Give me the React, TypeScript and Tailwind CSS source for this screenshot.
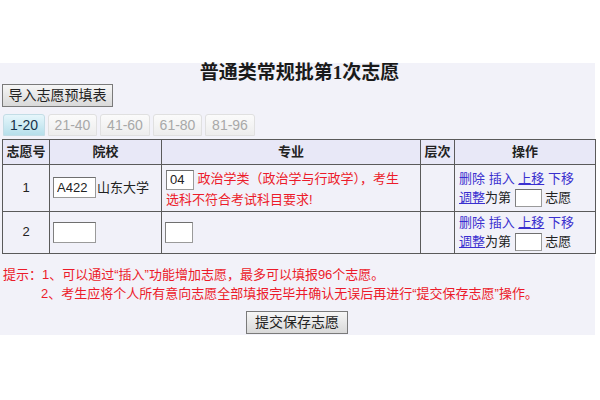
import React from 'react';

const FONT = "font-['Liberation_Sans','Noto_Sans_CJK_SC',sans-serif]";

const TABS = [
  { label: '1-20', width: 'w-[42px]', active: true },
  { label: '21-40', width: 'w-[49px]', active: false },
  { label: '41-60', width: 'w-[50px]', active: false },
  { label: '61-80', width: 'w-[49px]', active: false },
  { label: '81-96', width: 'w-[50px]', active: false },
];

const GrayButton: React.FC<{ children: React.ReactNode; className?: string }> = ({ children, className }) => (
  <button
    type="button"
    className={`h-[23px] border border-[#7a7a7a] bg-gradient-to-b from-[#f6f6f6] to-[#d9d9d9] text-[14px] leading-[21px] text-[#222] ${className || ''}`}
  >
    {children}
  </button>
);

const SmallInput: React.FC<{ value?: string; className: string }> = ({ value, className }) => (
  <input
    readOnly
    defaultValue={value}
    className={`inline-block align-middle border border-[#9a9a9a] border-t-[#6f6f6f] border-l-[#7f7f7f] bg-white px-[3px] text-[13px] text-[#222] outline-none ${className}`}
  />
);

const Actions: React.FC = () => (
  <div className="text-[13px] leading-[19px] text-[#222]">
    <div className="whitespace-nowrap text-[#3a2fcf]">
      <a>删除</a> <a>插入</a> <a className="underline">上移</a> <a>下移</a>
    </div>
    <div className="whitespace-nowrap">
      <a className="text-[#3a2fcf] underline">调整</a>为第 <SmallInput className="h-[18px] w-[27px]" /> 志愿
    </div>
  </div>
);

const cell = 'border border-[#5a5a5a] bg-[#f1f1f9]';
const head = 'border border-[#5a5a5a] bg-[#e8e8f7] text-[13px] font-bold text-[#222] text-center';

export default function App() {
  return (
    <div className={`h-[400px] w-[600px] bg-white pt-[63px] ${FONT}`}>
      <div className="h-[272px] w-[595px] bg-[#f2f2f9]">
        <div className="pl-[4px] text-center text-[19px] font-bold leading-[20px] text-[#1a1a1a]">
          普通类常规批第<span className="font-['Liberation_Serif']">1</span>次志愿
        </div>

        <div className="pl-[2px]">
          <GrayButton className="w-[111px]">导入志愿预填表</GrayButton>
        </div>

        <div className="mt-[7px] flex gap-[3px] pl-[3px]">
          {TABS.map(t => (
            <div
              key={t.label}
              className={`h-[22px] ${t.width} rounded-t-[3px] border text-center text-[14px] leading-[20px] ${
                t.active
                  ? 'border-[#c3dde6] bg-gradient-to-b from-[#e6f6fb] to-[#b6dfeb] text-[#16324a]'
                  : 'border-[#e0e0e0] bg-gradient-to-b from-[#fbfbfb] to-[#ededed] text-[#a8a8a8]'
              }`}
            >
              {t.label}
            </div>
          ))}
        </div>

        <table className="ml-[2px] mt-[3px] w-[593px] table-fixed border-collapse">
          <colgroup>
            <col className="w-[47px]" />
            <col className="w-[112px]" />
            <col className="w-[259px]" />
            <col className="w-[34px]" />
            <col className="w-[141px]" />
          </colgroup>
          <thead>
            <tr className="h-[25px]">
              <th className={head}>志愿号</th>
              <th className={head}>院校</th>
              <th className={head}>专业</th>
              <th className={head}>层次</th>
              <th className={head}>操作</th>
            </tr>
          </thead>
          <tbody>
            <tr className="h-[46px]">
              <td className={`${cell} text-center text-[13px] text-[#222]`}>1</td>
              <td className={`${cell} px-[3px] text-[13px] text-[#222] whitespace-nowrap`}>
                <SmallInput value="A422" className="h-[21px] w-[43px]" />
                <span className="ml-[1px] align-middle">山东大学</span>
              </td>
              <td className={`${cell} px-[4px] pt-[4px] pb-[2px] align-top text-[13px] leading-[19px] text-[#ec1b2a]`}>
                <div className="whitespace-nowrap">
                  <SmallInput value="04" className="h-[20px] w-[28px]" /> 政治学类（政治学与行政学），考生
                </div>
                <div className="whitespace-nowrap">选科不符合考试科目要求!</div>
              </td>
              <td className={cell}></td>
              <td className={`${cell} pl-[4px]`}>
                <Actions />
              </td>
            </tr>
            <tr className="h-[42px]">
              <td className={`${cell} text-center text-[13px] text-[#222]`}>2</td>
              <td className={`${cell} px-[3px]`}>
                <SmallInput className="h-[21px] w-[43px]" />
              </td>
              <td className={`${cell} px-[3px]`}>
                <SmallInput className="h-[21px] w-[28px]" />
              </td>
              <td className={cell}></td>
              <td className={`${cell} pl-[4px]`}>
                <Actions />
              </td>
            </tr>
          </tbody>
        </table>

        <div className="mt-[11px] pl-[3px] text-[13px] leading-[19px] text-[#ec1b2a]">
          <div className="whitespace-nowrap">提示：1、可以通过“插入”功能增加志愿，最多可以填报96个志愿。</div>
          <div className="whitespace-nowrap pl-[38px]">2、考生应将个人所有意向志愿全部填报完毕并确认无误后再进行“提交保存志愿”操作。</div>
        </div>

        <div className="mt-[8px] flex justify-center pr-[1px]">
          <GrayButton className="w-[102px]">提交保存志愿</GrayButton>
        </div>
      </div>
    </div>
  );
}
